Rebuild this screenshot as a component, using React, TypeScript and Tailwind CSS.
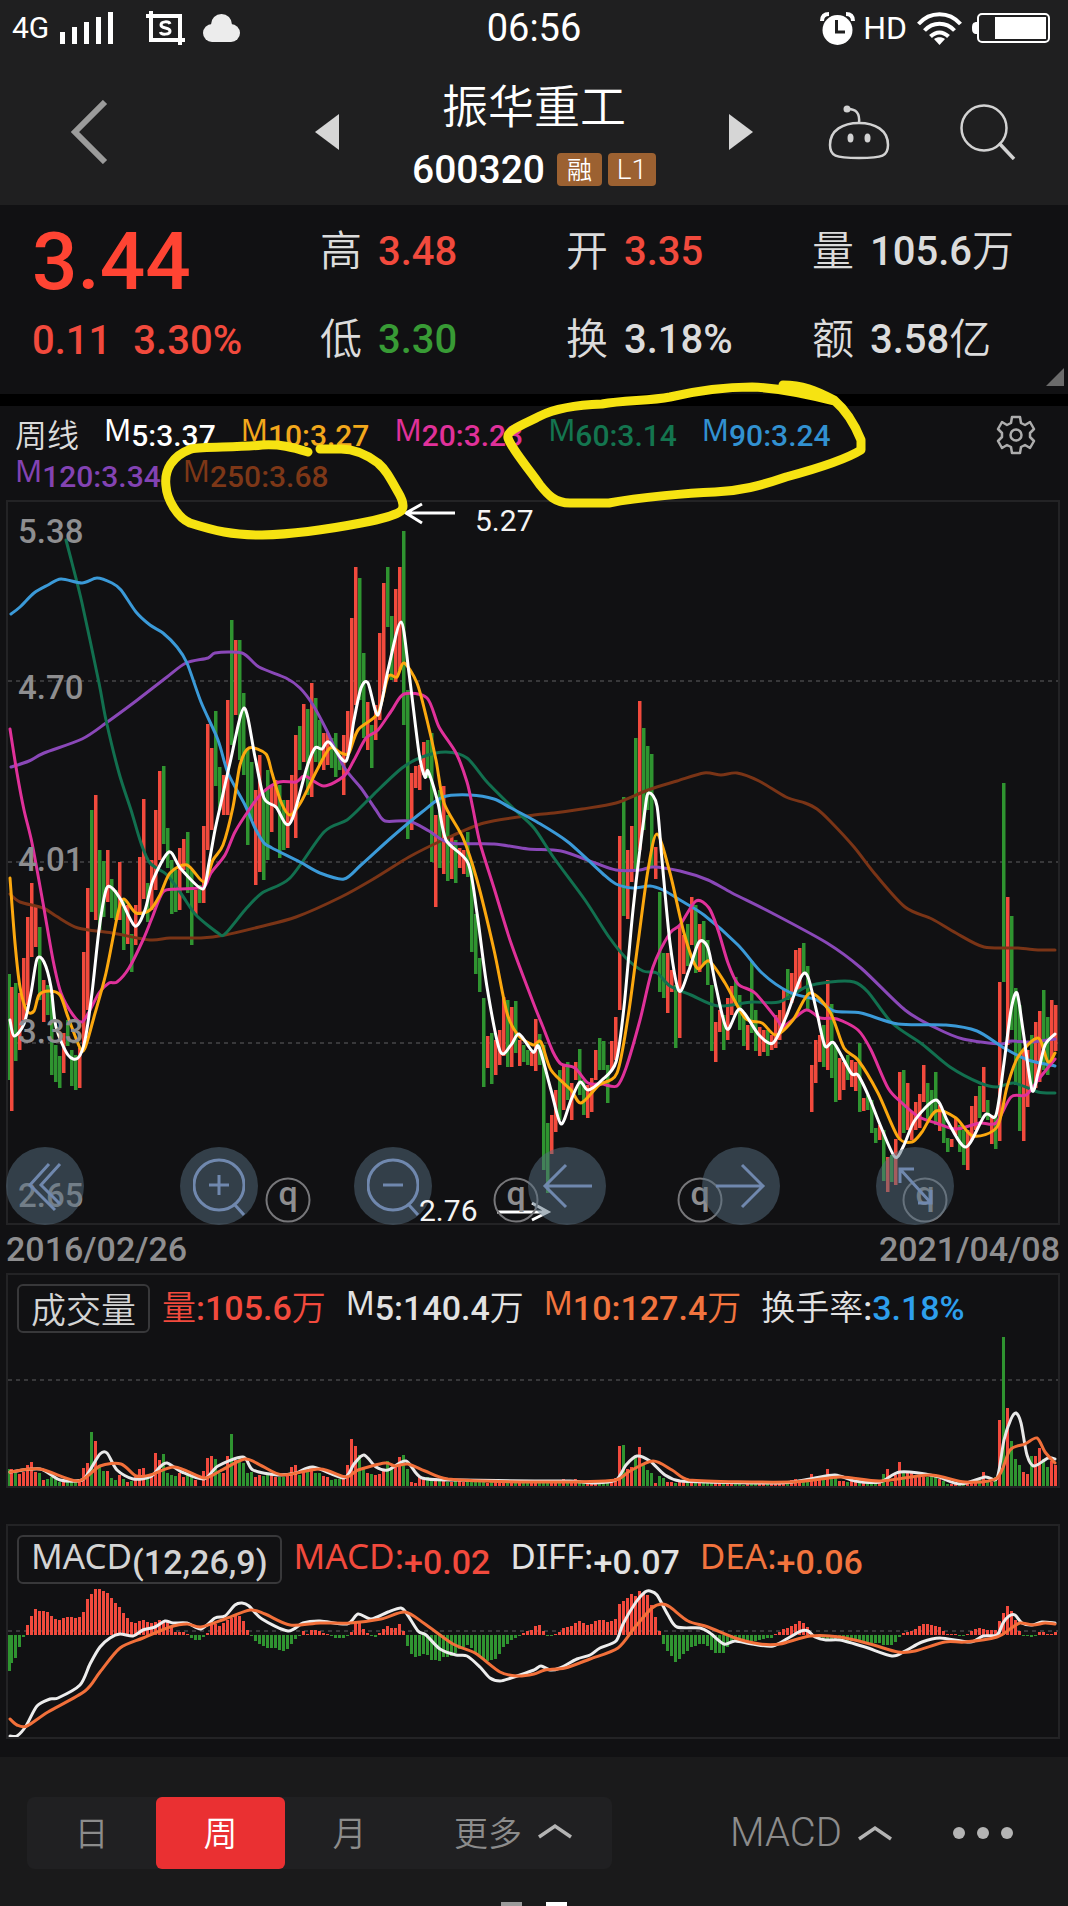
import type { ReactNode } from "react";

const NUM = "font-['Roboto','Noto_Sans_CJK_SC',sans-serif]";
const CJK = "font-['Noto_Sans_CJK_SC',sans-serif]";
const LATIN = "font-['Noto_Sans','Open_Sans',sans-serif]";

const RED = "#f24a3d";
const GREEN = "#2f9430";

const FIRST_X = 12;
const STEP = 4;

/* Weekly bars: direction (R up, G down), then the y of the high and of the low. */
const CANDLES = `R987,1111 G983,1061 R993,1050 R958,1020 R917,1005 R883,957 R906,947 G927,1000 R980,1022 G985,1015
G995,1075 G1045,1082 G1056,1088 R1033,1073 G1020,1046 G1050,1086 G1055,1090 R1048,1088 R952,1050 R888,1010
G810,912 R795,920 G850,930 G861,917 R850,902 G879,918 G890,920 R862,920 G900,950 R905,944
G934,972 R905,945 R857,912 R799,899 G883,922 R860,910 R810,890 R771,860 G766,844 G828,868
G860,914 G870,912 R848,910 R839,870 G832,893 G870,945 R890,915 G885,903 R826,903 R724,850
R748,830 G711,786 G767,810 R775,815 R700,815 G620,745 R640,715 G640,760 G693,775 G750,845
G762,820 R790,885 R755,872 G790,880 G770,860 R785,832 R780,808 G785,858 G800,850 R800,848
R775,820 R735,838 G726,770 R704,762 G709,795 R683,797 G698,762 G720,765 R733,770 R733,765
G738,768 G733,777 G755,770 R735,795 R711,755 R618,740 R567,705 G578,700 G653,738 R702,750
G725,768 R705,740 R633,720 R583,690 G567,627 G616,680 R589,682 R567,670 G531,725 G690,839
R773,830 R766,788 R765,790 R742,775 G740,778 G733,862 R815,907 G790,868 R786,874 G815,881
R835,879 G840,883 R848,868 R850,874 G832,877 G862,952 G914,974 G958,992 G998,1087 R1036,1068
G1033,1084 R1040,1075 R1030,1065 R997,1056 G1000,1067 R1007,1067 G1001,1053 R1040,1066 G1045,1062 G1050,1065
R1052,1066 R1019,1071 G1034,1065 G1045,1170 G1123,1193 R1115,1154 R1090,1132 G1070,1120 R1065,1110 G1062,1100
R1083,1120 R1062,1080 G1049,1095 G1080,1115 R1085,1118 R1078,1112 R1050,1080 G1038,1070 G1041,1070 G1065,1103
R1041,1070 R1017,1060 R836,1010 G797,916 R850,919 R826,882 G738,870 R701,850 G728,830 G746,810
G754,868 R847,879 G892,992 G953,998 R953,1013 R970,992 G985,1048 R925,1038 R935,974 G924,966
R897,945 G905,973 R924,972 G921,965 G940,985 G985,1051 R1022,1062 R1010,1032 G1015,1050 R998,1040
R986,1015 G977,1005 G995,1030 G1012,1046 R1025,1050 G961,1033 G1010,1051 R1027,1056 R1030,1052 G1030,1056
R1035,1050 R1015,1048 R1010,1040 R990,1030 G969,1000 R973,1003 R950,995 R948,990 G943,975 G966,1010
R1065,1112 R1040,1083 R1035,1062 G1025,1067 R980,1070 G1004,1078 G1045,1102 R1058,1100 R1062,1090 G1055,1080
R1060,1087 R1062,1091 G1043,1112 R1098,1111 G1095,1110 G1100,1133 G1128,1143 R1125,1140 G1130,1181 R1157,1192
G1155,1182 R1139,1185 R1072,1140 G1070,1133 R1083,1130 R1112,1140 R1102,1130 R1094,1128 R1065,1102 G1083,1120
G1090,1115 G1072,1125 R1105,1131 G1110,1143 G1138,1152 R1139,1147 R1118,1135 G1125,1152 G1130,1165 R1130,1170
R1106,1140 R1096,1130 G1086,1118 R1067,1112 G1100,1120 R1115,1144 G1115,1149 R982,1141 G783,982 R897,1045
G916,1030 G988,1085 G1005,1131 R1050,1141 R1050,1107 G1035,1090 R1022,1088 R1011,1082 G990,1070 G1017,1075
R1000,1060 R1005,1051`
  .split(/\s+/)
  .map((t) => {
    const [high, low] = t.slice(1).split(",").map(Number);
    return { color: t[0] === "R" ? RED : GREEN, high, low };
  });

const VOLUMES = `18 14 13 15 22 25 15 14 7 8 10 8 5 7 5 6 5 8 19 24 55 46 22 16 16 9 7 12 8 5
6 10 18 19 10 12 34 27 33 14 12 11 14 10 12 11 7 1 16 29 31 28 14 14 31 53 27 30 24 14
15 10 12 11 12 12 10 10 10 12 20 22 12 18 18 20 14 14 11 10 7 8 8 12 22 48 41 32 20 14
13 12 13 18 26 20 22 30 32 18 5 4 10 9 10 7 9 8 6 5 5 6 6 5 6 6 6 5 5 4
5 5 5 6 5 5 5 6 4 5 4 5 6 5 5 4 5 6 8 7 6 8 7 4 3 4 3 4 5 5
6 9 41 42 18 20 30 40 24 17 14 4 11 9 5 5 4 6 7 5 6 7 6 4 5 7 5 6 6 6
5 5 5 2 4 4 5 4 4 5 4 5 4 5 5 7 8 7 8 8 13 9 9 10 18 12 10 6 6 5
7 5 7 4 4 5 4 5 13 18 5 12 25 16 16 14 12 12 10 10 11 12 8 6 3 3 4 4 4 4
5 6 8 15 6 5 10 67 150 79 46 28 22 15 13 31 31 39 28 20 26 22`
  .split(/\s+/)
  .map(Number);

const HISTOGRAM = `-28 -23 -12 -2 10 19 26 24 24 23 19 16 15 17 18 18 17 18 23 36 41 46 46 44 42 37 32 28 22 17
13 12 14 15 13 12 13 15 14 15 9 3 3 3 1 -3 -5 -5 -2 2 10 11 9 12 15 17 19 19 14 5
-1 -6 -9 -11 -13 -13 -13 -15 -16 -14 -9 -4 -1 4 1 5 5 4 2 1 -1 -3 -3 -3 -1 3 12 13 6 2
-1 -2 2 6 9 7 7 11 4 -11 -19 -22 -21 -19 -20 -25 -25 -26 -22 -22 -21 -18 -14 -12 -10 -13 -18 -21 -25 -26
-25 -24 -19 -12 -9 -5 -3 -1 2 4 5 9 10 4 -1 -1 1 3 7 8 9 12 14 12 10 11 14 15 15 13
14 16 31 34 37 41 39 44 42 40 30 18 4 -9 -16 -21 -27 -24 -19 -16 -12 -11 -9 -9 -11 -15 -18 -18 -18 -12
-8 -7 -7 -7 -6 -6 -6 -5 -4 -3 -3 1 3 6 7 9 11 14 12 8 2 -1 -3 -3 -4 -4 -5 -5 -6 -6
-6 -5 -6 -6 -7 -8 -8 -8 -10 -10 -10 -7 -2 2 3 4 6 9 11 11 10 9 8 4 1 1 1 -1 -1 1
4 6 7 6 5 5 5 14 22 29 24 15 4 -1 -1 -2 -1 3 3 1 1 3`
  .split(/\s+/)
  .map(Number);

const MA_LINES = [
  {
    color: "#7a3416",
    points:
      "10,894 20,902 43,908 56,916 78,928 112,933 150,940 170,938 201,938 225,935 259,927 296,917 341,897 375,878 409,857 443,840 484,823 534,815 554,813 582,809 616,803 648,790 677,781 704,773 721,775 737,773 759,781 786,797 805,803 817,809 830,821 854,847 875,874 905,907 932,919 956,933 984,947 1018,948 1038,950 1055,950",
  },
  {
    color: "#8a48b8",
    points:
      "11,767 29,761 44,753 82,739 106,723 136,701 167,677 186,663 208,658 215,653 242,653 259,667 286,678 300,688 313,705 327,731 344,767 361,788 376,810 385,821 409,821 429,831 450,843 494,844 528,849 561,851 595,863 616,870 640,870 653,867 680,871 708,880 732,893 772,913 827,943 861,968 905,1010 936,1028 963,1039 1001,1044 1011,1041 1031,1042 1055,1039",
  },
  {
    color: "#12704f",
    points:
      "66,540 72,563 82,603 99,683 106,720 119,773 131,810 141,843 150,863 167,875 182,895 196,915 218,933 225,934 245,910 262,893 290,878 324,832 347,820 366,802 375,793 402,768 422,757 446,752 467,758 487,782 514,809 534,828 554,858 585,900 609,937 626,958 643,971 657,973 670,986 691,995 718,1006 752,1002 779,1002 806,987 830,982 854,982 868,992 892,1023 922,1044 950,1067 980,1083 997,1087 1014,1083 1038,1092 1055,1093",
  },
  {
    color: "#3b9ad8",
    points:
      "11,614 20,607 34,593 48,585 61,579 82,583 97,578 112,583 121,590 136,612 150,625 163,633 177,647 187,663 201,702 218,740 228,773 245,805 255,828 264,843 272,848 300,862 320,873 344,879 361,865 392,837 422,812 443,797 470,795 494,799 511,808 537,822 568,842 602,873 616,884 633,888 650,886 663,890 680,900 704,915 738,945 762,973 789,992 817,1000 834,1011 861,1013 898,1024 946,1025 977,1031 1004,1048 1028,1060 1055,1066",
  },
  {
    color: "#e0319a",
    points:
      "10,729 17,773 24,810 32,843 43,903 53,960 61,993 73,1015 82,1022 90,1010 99,993 109,983 117,982 129,968 143,940 152,918 163,892 177,889 204,887 211,873 225,855 235,832 249,810 262,793 279,782 296,782 305,776 324,786 344,776 354,760 366,738 378,730 392,710 404,694 427,698 439,727 456,753 467,782 473,809 480,843 494,888 511,943 533,1002 543,1027 553,1052 561,1064 575,1068 588,1083 602,1084 617,1086 626,1068 640,1020 653,967 670,933 680,925 696,901 709,908 718,930 728,963 738,984 755,993 776,1018 784,1026 806,1010 820,1018 837,1019 858,1030 871,1050 888,1088 902,1103 919,1117 936,1123 956,1129 980,1123 996,1123 1011,1097 1026,1095 1038,1080 1055,1059",
  },
  {
    color: "#fca80f",
    points:
      "10,878 15,943 20,987 27,1011 34,1011 39,995 49,991 60,995 68,1017 80,1048 85,1048 94,1017 106,973 118,913 124,899 136,913 150,910 160,895 170,873 187,865 204,882 213,860 223,845 233,807 240,765 249,748 266,754 272,773 281,802 290,815 301,802 317,770 330,748 341,753 349,753 358,730 378,713 388,677 397,677 404,663 417,683 427,720 436,760 444,803 463,838 477,880 494,950 507,1013 518,1035 533,1045 541,1042 551,1070 571,1090 581,1103 599,1085 617,1073 628,1017 638,943 648,870 657,834 670,873 684,933 697,968 709,961 725,983 745,1018 762,1023 776,1035 793,1020 810,993 830,1012 844,1048 858,1060 878,1093 898,1137 912,1142 922,1132 936,1111 956,1118 973,1136 997,1127 1007,1087 1018,1057 1038,1038 1048,1062 1055,1053",
  },
  {
    color: "#ffffff",
    points:
      "10,1020 14,1036 24,1024 31,993 37,959 44,962 51,987 56,1027 68,1055 78,1058 85,1040 92,993 99,930 106,890 112,888 121,900 135,926 145,910 153,880 169,852 181,869 203,889 209,863 215,830 221,803 230,763 244,708 255,757 264,798 276,807 286,824 293,817 307,767 315,748 322,749 329,742 346,761 354,720 361,688 368,683 378,715 388,670 401,622 409,673 419,753 425,777 428,771 438,803 446,840 468,863 477,913 487,987 500,1051 511,1045 519,1034 533,1052 539,1047 551,1090 561,1124 571,1100 580,1082 588,1090 602,1080 616,1062 624,1007 633,910 645,810 649,793 657,806 662,860 670,943 679,991 689,970 699,942 708,948 716,987 727,1029 740,1009 759,1035 773,1043 786,1017 801,977 808,977 817,1013 825,1046 834,1043 851,1073 858,1075 869,1097 881,1127 895,1157 904,1145 915,1120 936,1100 948,1122 966,1147 985,1115 996,1115 1004,1063 1011,1010 1017,993 1023,1030 1032,1090 1038,1073 1045,1045 1055,1034",
  },
];

const VOLUME_LINES = [
  {
    color: "#e8e8e8",
    points:
      "10,1472 40,1469 60,1480 82,1480 90,1470 100,1454 107,1453 117,1470 133,1479 150,1477 160,1467 167,1463 182,1472 204,1479 218,1466 243,1457 253,1470 277,1475 296,1473 313,1467 344,1478 354,1464 364,1455 376,1467 388,1470 406,1461 422,1478 460,1480 534,1481 570,1481 595,1483 616,1480 626,1465 637,1456 650,1461 665,1475 680,1481 780,1483 810,1479 835,1475 855,1481 880,1482 900,1472 935,1476 960,1484 985,1477 997,1478 1004,1440 1011,1419 1016,1413 1021,1423 1027,1455 1034,1466 1048,1458 1055,1459",
  },
  {
    color: "#f2703a",
    points:
      "10,1472 40,1469 78,1481 100,1466 121,1464 136,1476 150,1475 175,1467 204,1478 220,1471 245,1459 262,1466 283,1475 320,1469 346,1477 358,1470 385,1463 395,1466 408,1464 425,1471 448,1479 534,1482 616,1480 630,1471 653,1461 672,1470 689,1480 790,1482 840,1477 880,1481 930,1475 965,1482 997,1478 1010,1450 1025,1444 1037,1438 1045,1452 1055,1463",
  },
];

const MACD_LINES = [
  {
    color: "#ededed",
    points:
      "10,1737 17,1737 26,1727 37,1707 50,1700 58,1699 80,1686 90,1665 100,1648 110,1639 120,1635 133,1637 143,1631 155,1628 165,1622 173,1624 187,1624 201,1630 215,1619 225,1617 235,1606 242,1604 249,1607 262,1620 288,1632 303,1624 320,1622 347,1625 358,1615 371,1620 388,1613 401,1609 407,1615 418,1632 426,1636 440,1650 456,1656 467,1657 480,1668 490,1679 500,1682 511,1679 534,1671 541,1667 550,1671 560,1669 577,1660 590,1656 600,1649 616,1642 623,1625 636,1603 645,1593 650,1592 657,1596 668,1616 677,1628 700,1629 710,1634 724,1645 735,1642 752,1645 773,1647 790,1638 801,1632 808,1632 815,1638 826,1641 840,1641 865,1648 892,1657 905,1652 922,1643 940,1639 970,1643 983,1637 997,1636 1003,1624 1009,1617 1015,1616 1022,1624 1032,1626 1042,1623 1055,1624",
  },
  {
    color: "#f2703a",
    points:
      "10,1720 17,1726 27,1727 48,1713 85,1692 100,1673 120,1649 143,1639 170,1628 187,1625 201,1628 225,1620 250,1611 265,1615 290,1626 320,1624 350,1624 381,1620 405,1613 425,1625 453,1645 475,1654 500,1673 517,1677 534,1675 545,1671 565,1669 590,1660 618,1649 635,1628 652,1609 662,1605 670,1608 688,1622 708,1628 735,1639 760,1645 780,1645 810,1637 840,1638 870,1645 898,1653 915,1652 945,1643 965,1643 997,1638 1010,1630 1020,1624 1033,1626 1045,1624 1055,1625",
  },
];

/* Catmull-Rom spline through the points, as cubic segments. */
function smoothPath(points: string) {
  const p = points.split(" ").map((t) => t.split(",").map(Number));
  const k = 7;
  let d = `M${p[0][0]} ${p[0][1]}`;
  for (let i = 0; i < p.length - 1; i++) {
    const a = p[Math.max(i - 1, 0)];
    const b = p[i];
    const c = p[i + 1];
    const e = p[Math.min(i + 2, p.length - 1)];
    const limit = (c[0] - b[0]) / 2;
    const x1 = b[0] + Math.min((c[0] - a[0]) / k, limit);
    const x2 = c[0] - Math.min((e[0] - b[0]) / k, limit);
    d += `C${x1} ${b[1] + (c[1] - a[1]) / k} ${x2} ${c[1] - (e[1] - b[1]) / k} ${c[0]} ${c[1]}`;
  }
  return d;
}

function Curve({ points, color }: { points: string; color: string }) {
  return (
    <path
      d={smoothPath(points)}
      fill="none"
      stroke={color}
      strokeWidth="3"
      strokeLinejoin="round"
      strokeLinecap="round"
    />
  );
}

function GridLine({ y }: { y: number }) {
  return <line x1="8" x2="1058" y1={y} y2={y} stroke="#38383a" strokeWidth="2" strokeDasharray="4 4" />;
}

function StatusBar() {
  return (
    <div className={`grid h-[54px] grid-cols-[1fr_auto_1fr] items-center px-3 pt-0.5 text-white ${NUM}`}>
      <div className="flex items-center">
        <span className="w-12 text-[30px] leading-8">4G</span>
        <svg width="54" height="34" viewBox="0 0 54 34" fill="#fff" aria-hidden="true">
          <rect x="0" y="21" width="5" height="12" />
          <rect x="12" y="16" width="5" height="17" />
          <rect x="24" y="11" width="5" height="22" />
          <rect x="36" y="6" width="5" height="27" />
          <rect x="48" y="1" width="5" height="32" />
        </svg>
        <svg className="ml-8" width="39" height="34" viewBox="0 0 39 34" aria-hidden="true">
          <path d="M5 0V29H39M0 5H34V34" fill="none" stroke="#fff" strokeWidth="4" />
          <path
            d="M24 13C23 10 15 10 15 14C15 18 24 16 24 20C24 24 15 24 14.500 21"
            fill="none"
            stroke="#fff"
            strokeWidth="3"
          />
        </svg>
        <svg className="ml-[18px]" width="37" height="28" viewBox="0 0 37 28" fill="#ececec" aria-hidden="true">
          <circle cx="18.500" cy="10.500" r="10.500" />
          <circle cx="9" cy="19" r="9" />
          <circle cx="28" cy="19" r="9" />
          <rect x="9" y="14" width="19" height="14" />
        </svg>
      </div>
      <time className="text-[38px] leading-10">06:56</time>
      <div className="flex items-center justify-end pr-1.5">
        <svg width="35" height="33" viewBox="0 0 35 33" aria-hidden="true">
          <circle cx="17.500" cy="18" r="15" fill="#fff" />
          <path d="M2 9C2 4 5 2 9 2M33 9C33 4 30 2 26 2" fill="none" stroke="#fff" strokeWidth="4" />
          <path d="M16.500 8V20H25" fill="none" stroke="#1f1f1f" strokeWidth="3" />
        </svg>
        <span className="ml-2 text-[32px] leading-8">HD</span>
        <svg className="ml-2.5" width="45" height="33" viewBox="0 0 45 33" fill="none" stroke="#fff" strokeWidth="4" aria-hidden="true">
          <path d="M1.500 12C13 -1 32 -1 43.500 12" />
          <path d="M7.500 18.500C16 9.500 29 9.500 37.500 18.500" />
          <path d="M13.500 24.500C19 19 26 19 31.500 24.500" />
          <path d="M17 27C20 24.500 25 24.500 28 27L22.500 33Z" fill="#fff" stroke="none" />
        </svg>
        <svg className="ml-2.5" width="78" height="30" viewBox="0 0 78 30" aria-hidden="true">
          <path d="M5 9C1 9 0 11 0 15S1 21 5 21Z" fill="#fff" />
          <rect x="6" y="1" width="71" height="28" rx="4" fill="none" stroke="#fff" strokeWidth="2" />
          <rect x="23" y="4" width="51" height="22" fill="#fff" />
        </svg>
      </div>
    </div>
  );
}

function Header() {
  return (
    <header className="grid h-[151px] grid-cols-[1fr_auto_1fr] items-center pt-1">
      <div className="flex items-center justify-between pl-[70px]">
        <button type="button" aria-label="返回">
          <svg width="38" height="64" viewBox="0 0 38 64" fill="none" stroke="#9b9b9b" strokeWidth="6">
            <path d="M35 2L5 32L35 62" />
          </svg>
        </button>
        <button type="button" aria-label="上一只">
          <svg width="24" height="36" viewBox="0 0 24 36" fill="#d6d6d6">
            <path d="M24 0V36L0 18Z" />
          </svg>
        </button>
      </div>
      <div className="flex w-[390px] flex-col items-center gap-[18px]">
        <h1 className={`text-[46px] font-[350] leading-[58px] text-white ${CJK}`}>振华重工</h1>
        <div className="flex items-center gap-1.5">
          <span className={`text-[39px] font-medium leading-10 text-white ${NUM}`}>600320</span>
          <span className={`ml-1.5 flex h-[33px] w-[45px] items-center justify-center rounded-sm bg-[#9c6131] pb-0.5 text-[25px] font-[350] leading-[33px] text-white ${CJK}`}>
            融
          </span>
          <span className={`flex h-[33px] w-12 items-center justify-center rounded-sm bg-[#9c6131] text-[28px] font-light text-white ${NUM}`}>
            L1
          </span>
        </div>
      </div>
      <div className="flex items-center justify-between pr-[52px]">
        <button type="button" aria-label="下一只">
          <svg width="24" height="36" viewBox="0 0 24 36" fill="#d6d6d6">
            <path d="M0 0V36L24 18Z" />
          </svg>
        </button>
        <div className="flex items-center gap-[70px]">
          <button type="button" aria-label="智能助手">
            <svg width="62" height="56" viewBox="0 0 62 56" fill="none" stroke="#d2d2d2" strokeWidth="2.500">
              <path d="M31 19C47 19 60 26 60 41C60 52 55 54 31 54S2 52 2 41C2 26 15 19 31 19Z" />
              <path d="M31 19C32 9 28 5 20 5" />
              <circle cx="19" cy="5" r="3.500" fill="#d2d2d2" stroke="none" />
              <ellipse cx="22.500" cy="34" rx="3" ry="4.500" fill="#d2d2d2" stroke="none" />
              <ellipse cx="39.500" cy="34" rx="3" ry="4.500" fill="#d2d2d2" stroke="none" />
            </svg>
          </button>
          <button type="button" aria-label="搜索">
            <svg width="56" height="56" viewBox="0 0 56 56" fill="none" stroke="#d2d2d2" strokeWidth="2.500">
              <circle cx="24" cy="24" r="22.500" />
              <path d="M39 39L54 55" strokeWidth="3.500" />
            </svg>
          </button>
        </div>
      </div>
    </header>
  );
}

function Stat({ label, value, unit, tone }: { label: string; value: string; unit?: string; tone: string }) {
  return (
    <div className="flex h-[60px] items-center gap-4">
      <dt className={`pb-2 text-[42px] font-[350] leading-[52px] text-[#dcdcdc] ${CJK}`}>{label}</dt>
      <dd className={`flex items-center text-[40px] font-medium leading-[60px] ${tone} ${NUM}`}>
        {value}
        {unit && <span className={`pb-2 text-[42px] font-[350] leading-[52px] ${CJK}`}>{unit}</span>}
      </dd>
    </div>
  );
}

function Quote() {
  return (
    <section className="relative flex h-[189px] pl-8">
      <div className={`w-[288px] text-[#f24a3d] ${NUM}`}>
        <p className="pt-[15px] text-[80px] font-medium leading-[84px] text-[#ff4433]">3.44</p>
        <p className="flex gap-[22px] pt-[9px] text-[40px] font-medium leading-[56px]">
          <span>0.11</span>
          <span>3.30%</span>
        </p>
      </div>
      <dl className="grid flex-1 grid-cols-[246px_246px_1fr] content-start gap-y-7 pt-[17px]">
        <Stat label="高" value="3.48" tone="text-[#f24a3d]" />
        <Stat label="开" value="3.35" tone="text-[#f24a3d]" />
        <Stat label="量" value="105.6" unit="万" tone="text-[#dcdcdc]" />
        <Stat label="低" value="3.30" tone="text-[#389b35]" />
        <Stat label="换" value="3.18%" tone="text-[#dcdcdc]" />
        <Stat label="额" value="3.58" unit="亿" tone="text-[#dcdcdc]" />
      </dl>
      <svg className="absolute bottom-2 right-1" width="18" height="18" viewBox="0 0 18 18" fill="#6b6b6b" aria-hidden="true">
        <path d="M18 0V18H0Z" />
      </svg>
    </section>
  );
}

function Average({ value, tone }: { value: string; tone: string }) {
  return (
    <span className={`whitespace-nowrap ${tone}`}>
      <span className={`align-[5px] text-[30px] leading-8 ${LATIN}`}>M</span>
      <span className={`text-[30px] font-medium leading-8 ${NUM}`}>{value}</span>
    </span>
  );
}

function Legend() {
  return (
    <div className="relative h-[94px] pl-[15px] pr-8 pt-1.5">
      <div className="flex h-[42px] items-center gap-[25px]">
        <span className={`text-[32px] font-[350] leading-9 text-[#dcdcdc] ${CJK}`}>周线</span>
        <Average value="5:3.37" tone="text-white" />
        <Average value="10:3.27" tone="text-[#f2a81c]" />
        <Average value="20:3.23" tone="text-[#e0319a]" />
        <Average value="60:3.14" tone="text-[#14754f]" />
        <Average value="90:3.24" tone="text-[#3291d1]" />
        <button type="button" aria-label="设置" className="ml-auto pt-1">
          <svg width="40" height="40" viewBox="0 0 40 40" fill="none" stroke="#adadad" strokeWidth="2.500" strokeLinejoin="round">
            <path d="M16 2H24L25 8L29 10L34 7L38 14L34 18V22L38 26L34 33L29 30L25 32L24 38H16L15 32L11 30L6 33L2 26L6 22V18L2 14L6 7L11 10L15 8Z" />
            <circle cx="20" cy="20" r="5.500" />
          </svg>
        </button>
      </div>
      <div className="flex h-10 items-center gap-[22px]">
        <Average value="120:3.34" tone="text-[#8343b3]" />
        <Average value="250:3.68" tone="text-[#7d3717]" />
      </div>
    </div>
  );
}

function ChartButton({ label, children }: { label: string; children: ReactNode }) {
  return (
    <button
      type="button"
      aria-label={label}
      className="flex size-[78px] shrink-0 items-center justify-center rounded-full bg-[#556e7f]/50"
    >
      <svg width="52" height="60" viewBox="0 0 52 60" fill="none" stroke="#7088ae" strokeWidth="3">
        {children}
      </svg>
    </button>
  );
}

const PRICE_LABELS = [
  { text: "5.38", y: 543 },
  { text: "4.70", y: 699 },
  { text: "4.01", y: 871 },
  { text: "3.33", y: 1043 },
  { text: "2.65", y: 1207 },
];

function PriceChart() {
  return (
    <div className="relative ml-1.5 mr-2 border-2 border-[#232325]">
      <svg className={`block h-auto w-full ${NUM}`} viewBox="8 502 1050 721" role="img" aria-label="周线价格走势">
        <GridLine y={681} />
        <GridLine y={862} />
        <GridLine y={1043} />
        <rect x="8" y="974" width="3" height="106" fill={GREEN} />
        {CANDLES.map((c, i) => (
          <rect key={i} x={FIRST_X + i * STEP - 2} y={c.high} width="3.500" height={c.low - c.high} fill={c.color} />
        ))}
        {MA_LINES.map((l) => (
          <Curve key={l.color} {...l} />
        ))}
        {PRICE_LABELS.map((l) => (
          <text key={l.text} x="18" y={l.y} fill="#8e8e90" fontSize="33" fontWeight="500">
            {l.text}
          </text>
        ))}
        <g fill="none" stroke="#fff" strokeWidth="3">
          <path d="M455 513H406M422 504L406 513L422 523" />
          <path d="M497 1212H546M532 1203L548 1212L532 1220" />
        </g>
        <text x="475" y="531" fill="#f4f4f4" fontSize="30">
          5.27
        </text>
        {[288, 516, 700, 925].map((x) => (
          <g key={x}>
            <circle cx={x} cy="1200" r="21.500" fill="none" stroke="#77777a" strokeWidth="2" />
            <text x={x} y="1205" textAnchor="middle" fill="#8e8e90" fontSize="34" fontWeight="500">
              q
            </text>
          </g>
        ))}
      </svg>
      <div className="absolute -bottom-0.5 -left-0.5 flex gap-24">
        <ChartButton label="最早">
          <path d="M30 8L11 29L36 54M41 8L22 29L41 48" />
        </ChartButton>
        <ChartButton label="放大">
          <circle cx="26" cy="29" r="25" />
          <path d="M16 29H36M26 19V39M42 49L51 59" />
        </ChartButton>
        <ChartButton label="缩小">
          <circle cx="26" cy="29" r="25" />
          <path d="M16 29H36M42 49L51 59" />
        </ChartButton>
        <ChartButton label="左移">
          <path d="M51 30H4M25 9L4 30L25 51" />
        </ChartButton>
        <ChartButton label="右移">
          <path d="M1 30H48M27 9L48 30L27 51" />
        </ChartButton>
        <ChartButton label="缩放">
          <path d="M25 13H11V27M11 13L42 47M42 34V47H29" />
        </ChartButton>
      </div>
      <span className={`pointer-events-none absolute bottom-0 left-[411px] text-[30px] leading-6 text-[#f4f4f4] ${NUM}`}>2.76</span>
    </div>
  );
}

/* Hand-drawn highlighter strokes lying over the legend and the chart. */
function Highlights() {
  return (
    <svg
      className="pointer-events-none absolute inset-x-0 top-0 h-auto w-full overflow-visible"
      viewBox="0 394 1068 160"
      fill="none"
      stroke="#f6e312"
      strokeWidth="9"
      strokeLinecap="round"
      strokeLinejoin="round"
      aria-hidden="true"
    >
      <path d="M308 452C292 447 280 444 262 445C236 448 204 446 191 449C172 456 164 470 166 486C167 500 178 518 190 523C215 531 232 535 262 535C300 534 335 528 361 523C378 520 396 515 401 511C404 508 404 502 398 492C390 478 386 470 378 463C366 454 352 449 341 449L320 449" />
      <path d="M783 385C802 385 815 390 834 400C848 412 857 430 861 440V450C845 460 812 470 786 477C760 486 740 491 715 492C690 493 640 497 609 503H570C555 503 548 495 540 485C530 470 512 450 508 438C506 430 525 424 540 416C556 408 575 405 602 404C625 400 650 401 670 397C700 390 725 387 752 387C775 388 800 392 834 401" />
    </svg>
  );
}

function IndicatorButton({ children }: { children: ReactNode }) {
  return (
    <button
      type="button"
      className="flex h-[49px] shrink-0 items-center rounded-md border-2 border-[#38383a] px-3 text-[#d4d4d4]"
    >
      {children}
    </button>
  );
}

function Han({ children }: { children: ReactNode }) {
  return <span className={`text-[34px] font-[350] leading-8 ${CJK}`}>{children}</span>;
}

function RaisedM() {
  return <span className={`align-[5px] text-[32px] font-normal leading-8 ${LATIN}`}>M</span>;
}

function VolumePanel() {
  return (
    <section className="ml-1.5 mr-2 border-2 border-[#232325]">
      <div className={`flex h-[60px] items-center gap-5 whitespace-nowrap pl-[9px] pt-1.5 text-[34px] font-medium leading-[44px] ${NUM}`}>
        <IndicatorButton>
          <span className={`text-[35px] font-[350] leading-[44px] ${CJK}`}>成交量</span>
        </IndicatorButton>
        <span className="-ml-2 text-[#f24a3d]">
          <Han>量</Han>:105.6<Han>万</Han>
        </span>
        <span className="text-[#e2e2e2]">
          <RaisedM />
          5:140.4<Han>万</Han>
        </span>
        <span className="text-[#f2743e]">
          <RaisedM />
          10:127.4<Han>万</Han>
        </span>
        <span className="text-[#2d9fec]">
          <span className="text-[#e2e2e2]">
            <Han>换手率</Han>:
          </span>
          3.18%
        </span>
      </div>
      <svg className="block h-auto w-full" viewBox="8 1335 1050 151" role="img" aria-label="成交量柱状图">
        <GridLine y={1380} />
        <rect x="8" y="1469" width="3" height="17" fill={GREEN} />
        {VOLUMES.map((v, i) => (
          <rect key={i} x={FIRST_X + i * STEP - 2} y={1487 - v} width="3" height={v} fill={CANDLES[i].color} />
        ))}
        {VOLUME_LINES.map((l) => (
          <Curve key={l.color} {...l} />
        ))}
      </svg>
    </section>
  );
}

function MacdValue({ name, value, tone }: { name: string; value: string; tone: string }) {
  return (
    <span className={tone}>
      <span className={`align-[5px] text-[35px] leading-9 ${LATIN}`}>{name}</span>
      <span className={`text-[34px] font-medium leading-9 ${NUM}`}>{value}</span>
    </span>
  );
}

function MacdPanel() {
  return (
    <section className="mb-[18px] ml-1.5 mr-2 border-2 border-[#232325]">
      <div className="flex h-[60px] items-center gap-5 whitespace-nowrap pl-[9px] pt-1.5">
        <IndicatorButton>
          <MacdValue name="MACD" value="(12,26,9)" tone="text-[#d4d4d4]" />
        </IndicatorButton>
        <div className="-ml-2 flex gap-5">
          <MacdValue name="MACD:" value="+0.02" tone="text-[#f24a3d]" />
          <MacdValue name="DIFF:" value="+0.07" tone="text-[#e2e2e2]" />
          <MacdValue name="DEA:" value="+0.06" tone="text-[#f2743e]" />
        </div>
      </div>
      <svg className="block h-auto w-full" viewBox="8 1587 1050 151" role="img" aria-label="MACD 指标图">
        <GridLine y={1632} />
        <rect x="8" y="1636" width="3" height="36" fill={GREEN} />
        {HISTOGRAM.map((v, i) => (
          <rect
            key={i}
            x={FIRST_X + i * STEP - 2}
            y={v > 0 ? 1636 - v : 1636}
            width="3"
            height={Math.abs(v)}
            fill={v > 0 ? RED : GREEN}
          />
        ))}
        {MACD_LINES.map((l) => (
          <Curve key={l.color} {...l} />
        ))}
      </svg>
    </section>
  );
}

function Caret() {
  return (
    <svg width="34" height="16" viewBox="0 0 34 16" fill="none" stroke="#b4b4b4" strokeWidth="3.500" aria-hidden="true">
      <path d="M1 14L17 3L33 14" />
    </svg>
  );
}

function BottomBar() {
  return (
    <footer className="flex flex-1 flex-col justify-between bg-[#1a1a1b] pt-10">
      <nav className={`flex items-center pl-[27px] pr-[54px] text-[34px] font-[350] text-[#8c8c8c] ${CJK}`}>
        <div className="flex h-[72px] w-[585px] rounded-lg bg-[#202022]">
          <button type="button" className="w-[129px] pb-1">
            日
          </button>
          <button type="button" aria-current="true" className="w-[129px] rounded-md bg-[#ea3032] pb-1 text-white">
            周
          </button>
          <button type="button" className="w-[129px] pb-1">
            月
          </button>
          <button type="button" className="flex flex-1 items-center justify-center gap-4 pb-1">
            更多
            <Caret />
          </button>
        </div>
        <button type="button" className={`ml-auto flex items-center gap-4 text-[40px] font-light ${NUM}`}>
          MACD
          <Caret />
        </button>
        <button type="button" aria-label="更多操作" className="ml-[60px]">
          <svg width="62" height="14" viewBox="0 0 62 14" fill="#b4b4b4">
            <circle cx="7" cy="7" r="6" />
            <circle cx="31" cy="7" r="6" />
            <circle cx="55" cy="7" r="6" />
          </svg>
        </button>
      </nav>
      <div className="flex justify-center gap-6">
        <span className="h-1 w-[21px] bg-[#9a9a9a]" />
        <span className="h-1 w-[21px] bg-white" />
      </div>
    </footer>
  );
}

export default function App() {
  return (
    <div className="flex min-h-screen flex-col bg-[#111113]">
      <div className="bg-[#1f1f20]">
        <StatusBar />
        <Header />
      </div>
      <Quote />
      <main className="relative border-t-[12px] border-black">
        <Legend />
        <PriceChart />
        <div className={`flex h-12 items-center justify-between pl-1.5 pr-2 text-[34px] font-medium leading-[48px] text-[#8e8e90] ${NUM}`}>
          <time>2016/02/26</time>
          <time>2021/04/08</time>
        </div>
        <VolumePanel />
        <div className="h-9" />
        <MacdPanel />
        <div className="absolute inset-x-0 -top-3">
          <Highlights />
        </div>
      </main>
      <BottomBar />
    </div>
  );
}
